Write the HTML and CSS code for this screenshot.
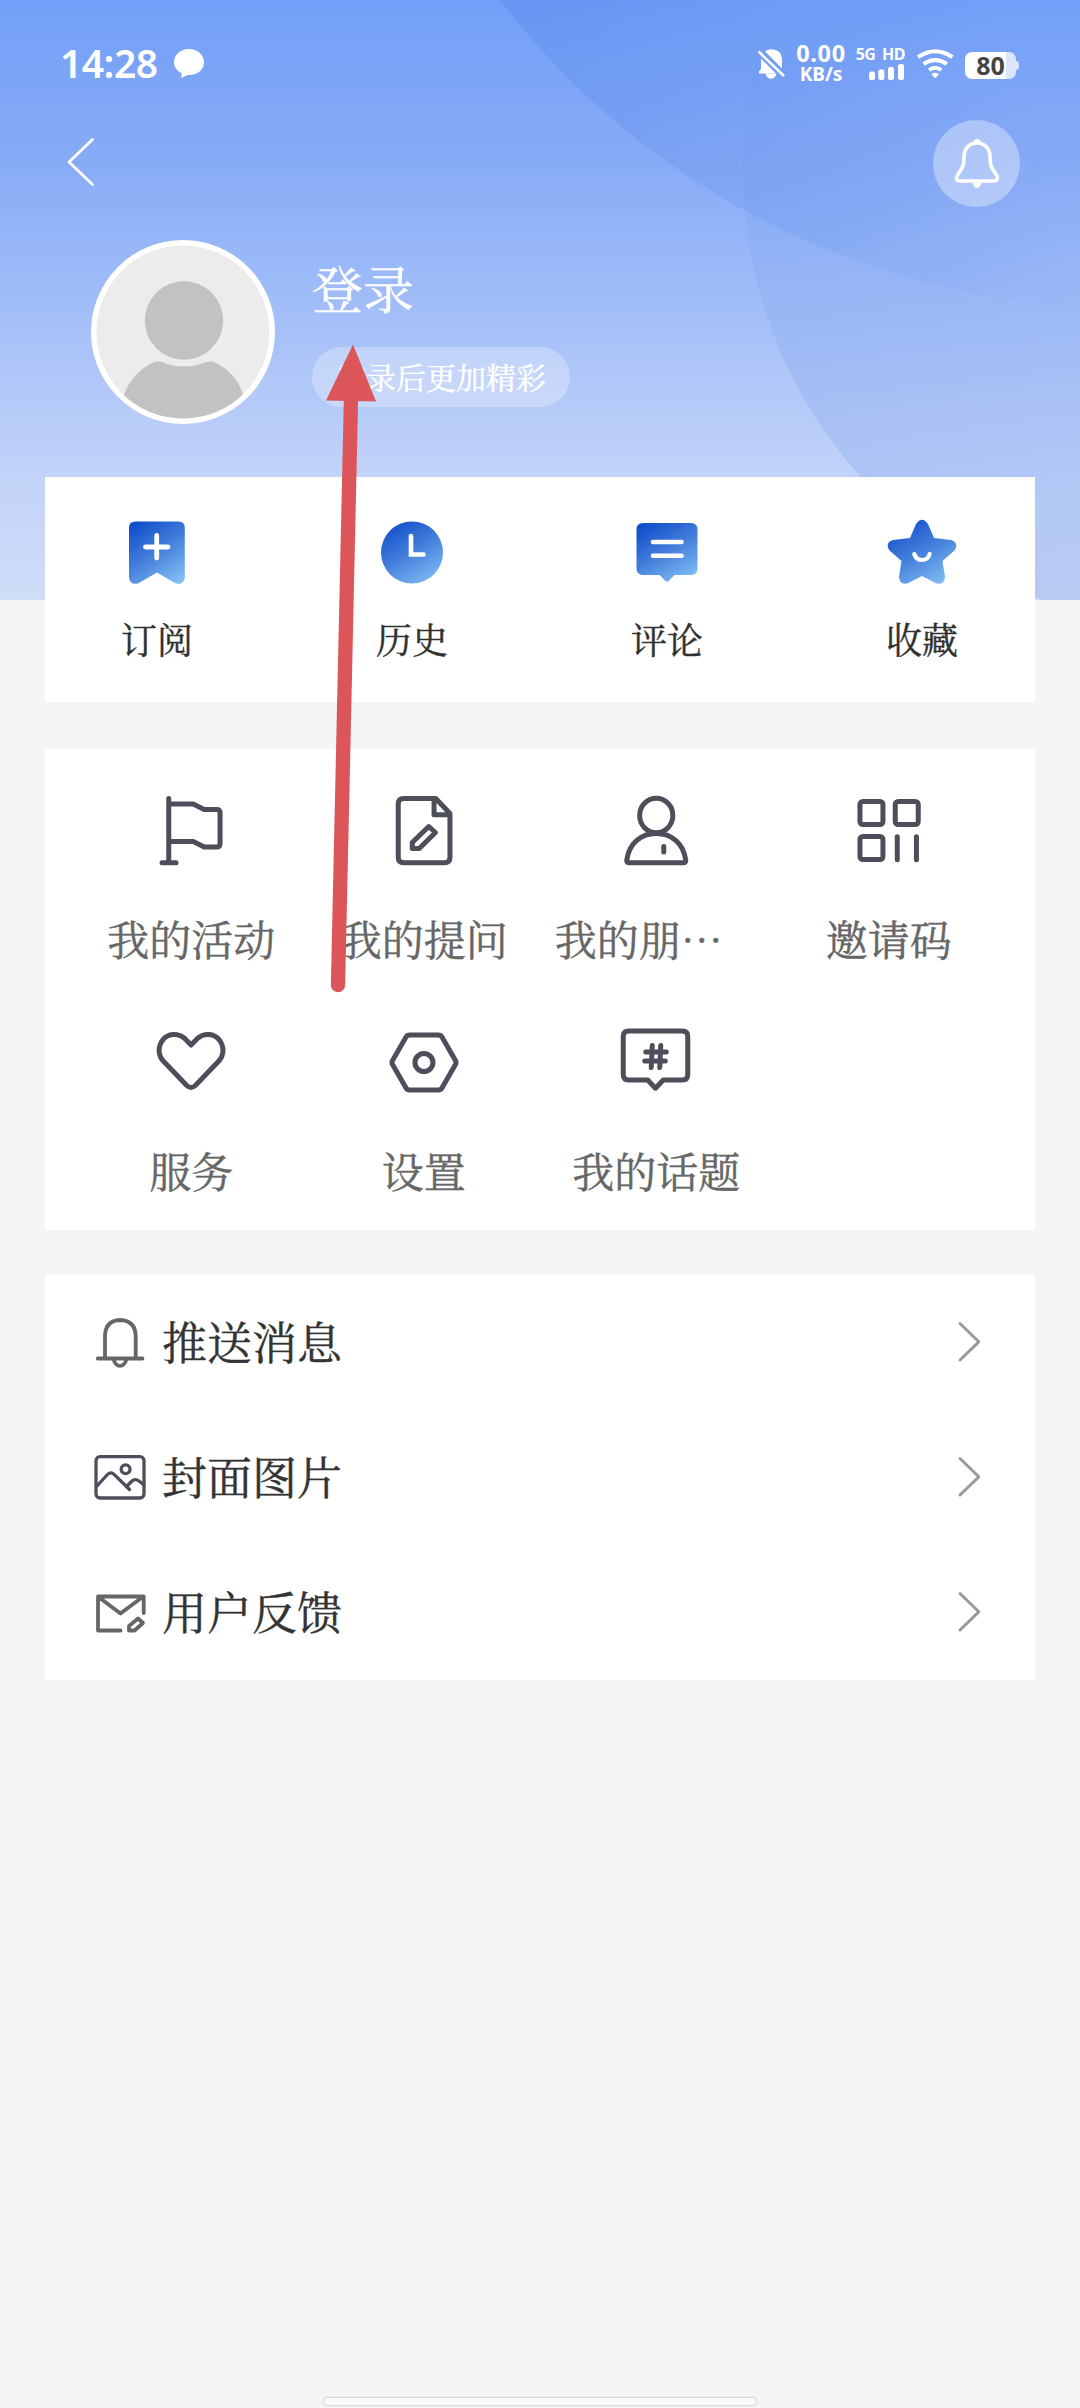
FILE: index.html
```html
<!DOCTYPE html>
<html lang="zh-CN">
<head>
<meta charset="utf-8">
<title>我的</title>
<link rel="stylesheet" href="styles.css">
</head>
<body>
<main class="screen">
  <svg class="backdrop" viewBox="0 0 1080 600" aria-hidden="true">
    <defs>
      <linearGradient id="sky" x1="0" y1="0" x2="0" y2="1">
        <stop offset="0" stop-color="#729ff8"/>
        <stop offset=".27" stop-color="#88abf6"/>
        <stop offset=".38" stop-color="#93b4f8"/>
        <stop offset=".78" stop-color="#c1d2f9"/>
        <stop offset="1" stop-color="#d0ddf8"/>
      </linearGradient>
      <linearGradient id="arcA" gradientUnits="userSpaceOnUse" x1="560" y1="130" x2="1000" y2="0">
        <stop offset="0" stop-color="#3f78e0" stop-opacity=".22"/>
        <stop offset="1" stop-color="#3f78e0" stop-opacity="0"/>
      </linearGradient>
      <linearGradient id="arcB" gradientUnits="userSpaceOnUse" x1="800" y1="480" x2="960" y2="60">
        <stop offset="0" stop-color="#5a86e0" stop-opacity=".2"/>
        <stop offset="1" stop-color="#5a86e0" stop-opacity="0"/>
      </linearGradient>
    </defs>
    <rect width="1080" height="600" fill="url(#sky)"/>
    <circle cx="1121" cy="-475" r="782" fill="url(#arcA)"/>
    <circle cx="1202" cy="170" r="459" fill="url(#arcB)"/>
  </svg>

  <header class="status">
    <span class="clock">14:28</span>
    <svg class="bubble" width="32" height="32" viewBox="173 48 32 32"><path fill="#fff" d="M189 49c8.500 0 15 5.800 15 13.300S197.500 75 189 75c-1.500 0-3 .2-7.500 3.300V73c-5-2.400-7.500-6-7.500-10.700C174 54.800 180.500 49 189 49Z"/></svg>
    <svg class="muted" width="30" height="34" viewBox="757 47 30 34" fill="#fff"><path d="M766 51.500c6-4.500 17-2.500 17 8.500v8.500Z"/><path d="M762 58.500 777 73.500H760v-2l2-2.500Z"/><path d="M766.500 73.500h11c-1.500 7-9.500 7-11 0Z"/><path d="M759.500 51.500 785 76" stroke="#fff" stroke-width="2.500"/></svg>
    <div class="speed"><span class="rate">0.00</span><span class="unit">KB/s</span></div>
    <div class="signal"><span class="net">5G HD</span>
      <svg width="36" height="17" viewBox="870 64 36 17" fill="#fff"><rect x="870" y="71.500" width="6" height="8.500" rx="2"/><rect x="879.300" y="69.500" width="6" height="10.500" rx="2"/><rect x="889" y="67" width="6" height="13" rx="2"/><rect x="899" y="64" width="6" height="16" rx="2"/></svg></div>
    <svg class="wifi" width="38" height="32" viewBox="917 49 38 32" fill="none" stroke="#fff"><path d="M919 58.200q17.200-12 34.400 0" stroke-width="4"/><path d="M924.500 65q11.700-8 23.400 0" stroke-width="4"/><path d="M930 71q6.200-4.200 12.400 0" stroke-width="3.800"/><path d="M932.300 75q3.900-2.400 7.800 0l-2.700 3.300q-1.200 1.500-2.400 0Z" fill="#fff" stroke="none"/></svg>
    <div class="battery"><span>80</span></div>
  </header>

  <nav class="topbar">
    <svg class="back" width="30" height="52" viewBox="66 136 30 52" fill="none" stroke="#fff" stroke-width="2.800" stroke-linecap="round" stroke-linejoin="round"><path d="M92.500 139.500 69 162l23.500 22.500"/></svg>
    <span class="notify">
      <svg width="48" height="52" viewBox="953 138 48 52" fill="none" stroke="#fff" stroke-width="3.600" stroke-linejoin="round"><path d="M977 143c-8 0-13 6-13 14 0 7-.8 10.500-5.500 16.500-3 4-2.500 7.500 1.500 7.500h34c4 0 4.500-3.500 1.500-7.500-4.700-6-5.500-9.500-5.500-16.500 0-8-5-14-13-14Z"/><path d="M972.500 143.500q1-4.500 4.500-4.500t4.500 4.500ZM972.500 183h9q-1.500 5-4.500 5t-4.500-5Z" fill="#fff" stroke="none"/></svg>
    </span>
  </nav>

  <section class="profile">
    <svg class="avatar" width="184" height="184" viewBox="91 240 184 184">
      <clipPath id="face"><circle cx="183" cy="332" r="86.500"/></clipPath>
      <circle cx="183" cy="332" r="92" fill="#fff"/><circle cx="183" cy="332" r="86.500" fill="#ececec"/>
      <g clip-path="url(#face)" fill="#c2c2c2"><circle cx="184" cy="320.500" r="39.200"/><path d="M122 424V404c3-20 16-34 30-41 7-3 10-1 16 1.200 10 3 22 3 32 0 6-2 10-4 16-1.200 14 7 27 21 29 41v20Z"/></g>
    </svg>
    <div class="who"><span class="login">登录</span><span class="pill">登录后更加精彩</span></div>
  </section>

  <section class="card quick">
    <svg width="0" height="0" class="defs"><defs><linearGradient id="blue" x1=".2" y1="0" x2=".8" y2="1"><stop offset="0" stop-color="#124fcb"/><stop offset=".5" stop-color="#4580dc"/><stop offset="1" stop-color="#80bcf3"/></linearGradient></defs></svg>
    <a class="item"><svg width="72" height="72" viewBox="121 517 72 72"><path fill="url(#blue)" d="M135.500 521.500h43q6.300 0 6.300 6.300v49.500q-1 8.500-9.500 6L157 572.500 138.500 583.300q-8.500 2.500-9.500-6v-49.500q0-6.300 6.500-6.300Z"/><path d="M145.500 547h22.500M156.700 535.500v22.500" stroke="#fff" stroke-width="4.800" stroke-linecap="round"/></svg><span>订阅</span></a>
    <a class="item"><svg width="72" height="72" viewBox="376 517 72 72"><circle cx="412" cy="552.500" r="31" fill="url(#blue)"/><path d="M411 536v18.500h12.500" fill="none" stroke="#fff" stroke-width="4.600" stroke-linecap="round"/></svg><span>历史</span></a>
    <a class="item"><svg width="72" height="72" viewBox="631 517 72 72"><path fill="url(#blue)" d="M643 523h48q6.500 0 6.500 6.500v39q0 6.500-6.500 6.500h-16.500l-6 6q-1.500 1.500-3 0l-6-6H643q-6.500 0-6.500-6.500v-39q0-6.500 6.500-6.500Z"/><path d="M653 542h28.500M653 555.700h28.500" stroke="#fff" stroke-width="4.600" stroke-linecap="round"/></svg><span>评论</span></a>
    <a class="item"><svg width="72" height="72" viewBox="886 517 72 72"><path fill="url(#blue)" d="M916 524Q922 515.500 928 524L934 538 951 540Q959.500 543 954.500 550.500L942.500 561 945 577Q944 586 935.500 583L922 576 908.500 583Q900 586 899 577L901.500 561 889.500 550.500Q884.500 543 893 540L910 538Z"/><path d="M914.300 554c2.500 8 13 8 15.400 0" fill="none" stroke="#fff" stroke-width="4.200" stroke-linecap="round"/></svg><span>收藏</span></a>
  </section>

  <section class="card tools">
    <a class="item"><svg class="line" viewBox="155.250 795 72 72"><path d="M169 798.500v64M162.300 862.700h14M169 804h24.500l11 5.500H217q3.300 0 3.300 3.300v30.900q0 3.300-3.300 3.300h-12.500l-11-5.500H169"/></svg><span>我的活动</span></a>
    <a class="item"><svg class="line" viewBox="388.250 795 72 72"><path d="M436 798.500H404q-5.500 0-5.500 5.500v53.200q0 5.500 5.500 5.500h40.700q5.500 0 5.500-5.500V813.500ZM434.300 799v15.800H450M429 826.500l6.700 6-16.200 16h-7v-6Z"/></svg><span>我的提问</span></a>
    <a class="item"><svg class="line" viewBox="620.750 795 72 72"><ellipse cx="657" cy="815.500" rx="16.600" ry="17.200"/><path d="M627.500 860C630 843 642 833.500 657 833.500s27 9.500 29.500 26.500q.3 2.800-2.500 2.800H630q-2.800 0-2.500-2.800ZM664.500 846.500v5.500"/></svg><span class="cut">我的朋…</span></a>
    <a class="item"><svg class="line" viewBox="853.250 795 72 72"><rect x="860.200" y="801.500" width="23" height="23" rx="3"/><rect x="895.500" y="801.500" width="23" height="23" rx="3"/><rect x="860.200" y="836.500" width="23" height="23" rx="3"/><path d="M897.500 836.800v23M916.700 836.800v23"/></svg><span>邀请码</span></a>
    <a class="item"><svg class="line" viewBox="155.250 1027 72 72"><path d="M191.300 1045 185 1038.500C178 1032.500 168 1033.500 163 1040 158 1046.500 158 1055.500 164 1061.500L187 1085.500q4.300 4 8.600 0L218.600 1061.500C224.600 1055.500 224.600 1046.500 219.600 1040 214.600 1033.500 204.600 1032.500 197.600 1038.500Z"/></svg><span>服务</span></a>
    <a class="item"><svg class="line" viewBox="388.250 1027 72 72"><path d="M410 1035h28.500q2.500 0 3.700 2l13.500 23.500q1.200 2 0 4L442.200 1088q-1.200 2-3.700 2H410q-2.500 0-3.700-2l-13.500-23.500q-1.200-2 0-4l13.500-23.500q1.200-2 3.700-2Z"/><circle cx="424.200" cy="1062.500" r="9"/></svg><span>设置</span></a>
    <a class="item"><svg class="line" viewBox="620.750 1027 72 72"><path d="M629.500 1031h53.500q5.500 0 5.500 5.500v38q0 5.500-5.500 5.500h-19l-7.800 8.200-7.700-8.200h-19q-5.500 0-5.500-5.500v-38q0-5.500 5.500-5.500ZM646.500 1052h20.500M645.500 1061h20.500M653 1045.500l-1 22M661.500 1045.500l-1 22"/></svg><span>我的话题</span></a>
  </section>

  <section class="card list">
    <a class="row"><svg class="lead" viewBox="92 1314.500 56 56" stroke="#666"><path d="M105 1357v-20.500q0-16.500 15-17 15.700.5 15.700 17V1357M97.800 1358h44.700M113.500 1359q2 6.300 6.500 6.300t6.500-6.300"/></svg><span>推送消息</span><svg class="chev" viewBox="958 1320.500 26 42"><path d="m961 1323 18.800 18.300L961 1359.500"/></svg></a>
    <a class="row"><svg class="lead thin" viewBox="92 1449.500 56 56" stroke="#4c4e5a"><rect x="96" y="1456.200" width="48" height="41.300" rx="4"/><circle cx="125.600" cy="1468.700" r="4.400"/><path d="M97 1485.500 107 1474.500q3.500-4 7.300-.4l15.200 14.900M126.500 1486l5-5q3.500-3.500 7.500-.5l5 4"/></svg><span>封面图片</span><svg class="chev" viewBox="958 1320.500 26 42"><path d="m961 1323 18.800 18.300L961 1359.500"/></svg></a>
    <a class="row"><svg class="lead" viewBox="92 1584.500 56 56" stroke="#666"><path d="M143.700 1612.500V1596H98v34h22.500M98.500 1596.500l22 16.500 22-16.500M138 1618l5 4.500-8.500 7.500h-5.500v-4.500Z"/></svg><span>用户反馈</span><svg class="chev" viewBox="958 1320.500 26 42"><path d="m961 1323 18.800 18.300L961 1359.500"/></svg></a>
  </section>

  <svg class="pointer" width="60" height="660" viewBox="320 340 60 660" aria-hidden="true"><path d="M351 398 338 985" stroke="#db5559" stroke-width="14.300" stroke-linecap="round"/><path d="m353 344.500 23 57-50-1Z" fill="#db5559"/></svg>
  <div class="homebar"></div>
</main>
</body>
</html>
```

FILE: styles.css
```css
* { box-sizing: border-box; }

body {
  margin: 0;
  background: #f5f5f5;
  font-family: "Noto Serif CJK SC", "Noto Serif SC", "Noto Sans CJK SC", serif;
  font-weight: 400;
}

svg { display: block; flex: none; }

.screen {
  position: relative;
  display: flex;
  flex-direction: column;
  width: 1080px;
  height: 2408px;
  overflow: hidden;
}

.backdrop {
  position: absolute;
  left: 0;
  top: 0;
  width: 1080px;
  height: 600px;
}

.status, .topbar, .profile, .card { position: relative; }
.profile, .card { -webkit-text-stroke: .4px currentColor; }

/* status bar */
.status {
  display: flex;
  align-items: center;
  height: 96px;
  padding: 32px 60px 0 60px;
  color: #fff;
  font-family: "Noto Sans", sans-serif;
  font-weight: 700;
}
.clock { width: 113px; margin-top: -2px; font-size: 39px; font-weight: 600; line-height: 64px; letter-spacing: -0.5px; }
.muted { margin-left: 551px; }
.speed { display: flex; flex-direction: column; align-items: center; width: 56px; margin: -2px 0 0 7px; }
.rate { font-size: 23.500px; line-height: 23px; letter-spacing: .7px; }
.unit { font-size: 19px; line-height: 19px; }
.signal { display: flex; flex-direction: column; align-items: flex-end; width: 52px; margin: -1px 0 0 4px; gap: 2px; }
.net { font-size: 16px; line-height: 16px; white-space: nowrap; letter-spacing: -.5px; word-spacing: 3px; }
.wifi { margin-left: 11px; }
.battery {
  position: relative;
  display: flex;
  align-items: center;
  justify-content: center;
  width: 51px;
  height: 27px;
  margin: 3px 0 0 11px;
  border-radius: 7px;
  background: linear-gradient(90deg, #fff 41px, #dbe5fd 41px);
  color: #444;
  font-size: 25px;
  line-height: 27px;
}
.battery::after {
  content: "";
  position: absolute;
  right: -3px;
  top: 9px;
  width: 3px;
  height: 9px;
  border-radius: 0 3px 3px 0;
  background: #dbe5fd;
}

/* navigation */
.topbar {
  display: flex;
  align-items: center;
  justify-content: space-between;
  height: 135px;
  padding: 0 60px 0 66px;
}
.back { margin-top: -3px; }
.notify {
  display: flex;
  align-items: center;
  justify-content: center;
  width: 87px;
  height: 87px;
  border-radius: 50%;
  background: rgba(255, 255, 255, .35);
}

/* profile */
.profile { display: flex; gap: 37px; height: 246px; padding: 9px 0 0 91px; }
.who { display: flex; flex-direction: column; align-items: flex-start; padding-top: 11px; color: #fff; }
.login { font-size: 51px; line-height: 72px; }
.pill {
  height: 60px;
  margin-top: 24px;
  padding: 0 24px;
  border-radius: 30px;
  background: rgba(255, 255, 255, .28);
  font-size: 30px;
  line-height: 59px;
}

/* cards */
.card { margin: 0 45px; background: #fff; }
.item { display: flex; flex-direction: column; align-items: center; white-space: nowrap; }

.quick {
  display: flex;
  justify-content: space-between;
  height: 225px;
  padding: 40px 77px 0 76px;
  color: #303030;
}
.defs { position: absolute; }
.quick .item { width: 72px; }
.quick span { margin-top: 24px; font-size: 36px; line-height: 52px; }

.tools {
  display: grid;
  grid-template-columns: repeat(4, 1fr);
  grid-auto-rows: 232px;
  height: 481px;
  margin-top: 47px;
  padding: 46px 30px 0;
  color: #666;
}
.tools span { margin-top: 40px; font-size: 42px; line-height: 62px; }
.tools .cut { margin-right: 35px; }
.line {
  width: 72px;
  height: 72px;
  fill: none;
  stroke: #4c4e5a;
  stroke-width: 5;
  stroke-linecap: round;
  stroke-linejoin: round;
}

.list { margin-top: 45px; }
.row { display: flex; align-items: center; height: 135px; padding: 0 52px 0 47px; color: #333; }
.row span { flex: 1; margin: -4px 0 0 14px; font-size: 45px; line-height: 66px; }
.lead { width: 56px; height: 56px; fill: none; stroke-width: 3.800; stroke-linecap: round; stroke-linejoin: round; }
.thin { stroke-width: 3.300; }
.chev { width: 26px; height: 42px; margin-top: -2px; fill: none; stroke: #999; stroke-width: 3; stroke-linecap: round; stroke-linejoin: round; }

/* overlays */
.pointer { position: absolute; left: 320px; top: 340px; }
.homebar {
  position: absolute;
  left: 323px;
  top: 2397px;
  width: 434px;
  height: 9px;
  border: 1px solid #d9d9d9;
  border-radius: 5px;
  background: #fafafa;
  box-shadow: 0 0 2px #ddd;
}
```
